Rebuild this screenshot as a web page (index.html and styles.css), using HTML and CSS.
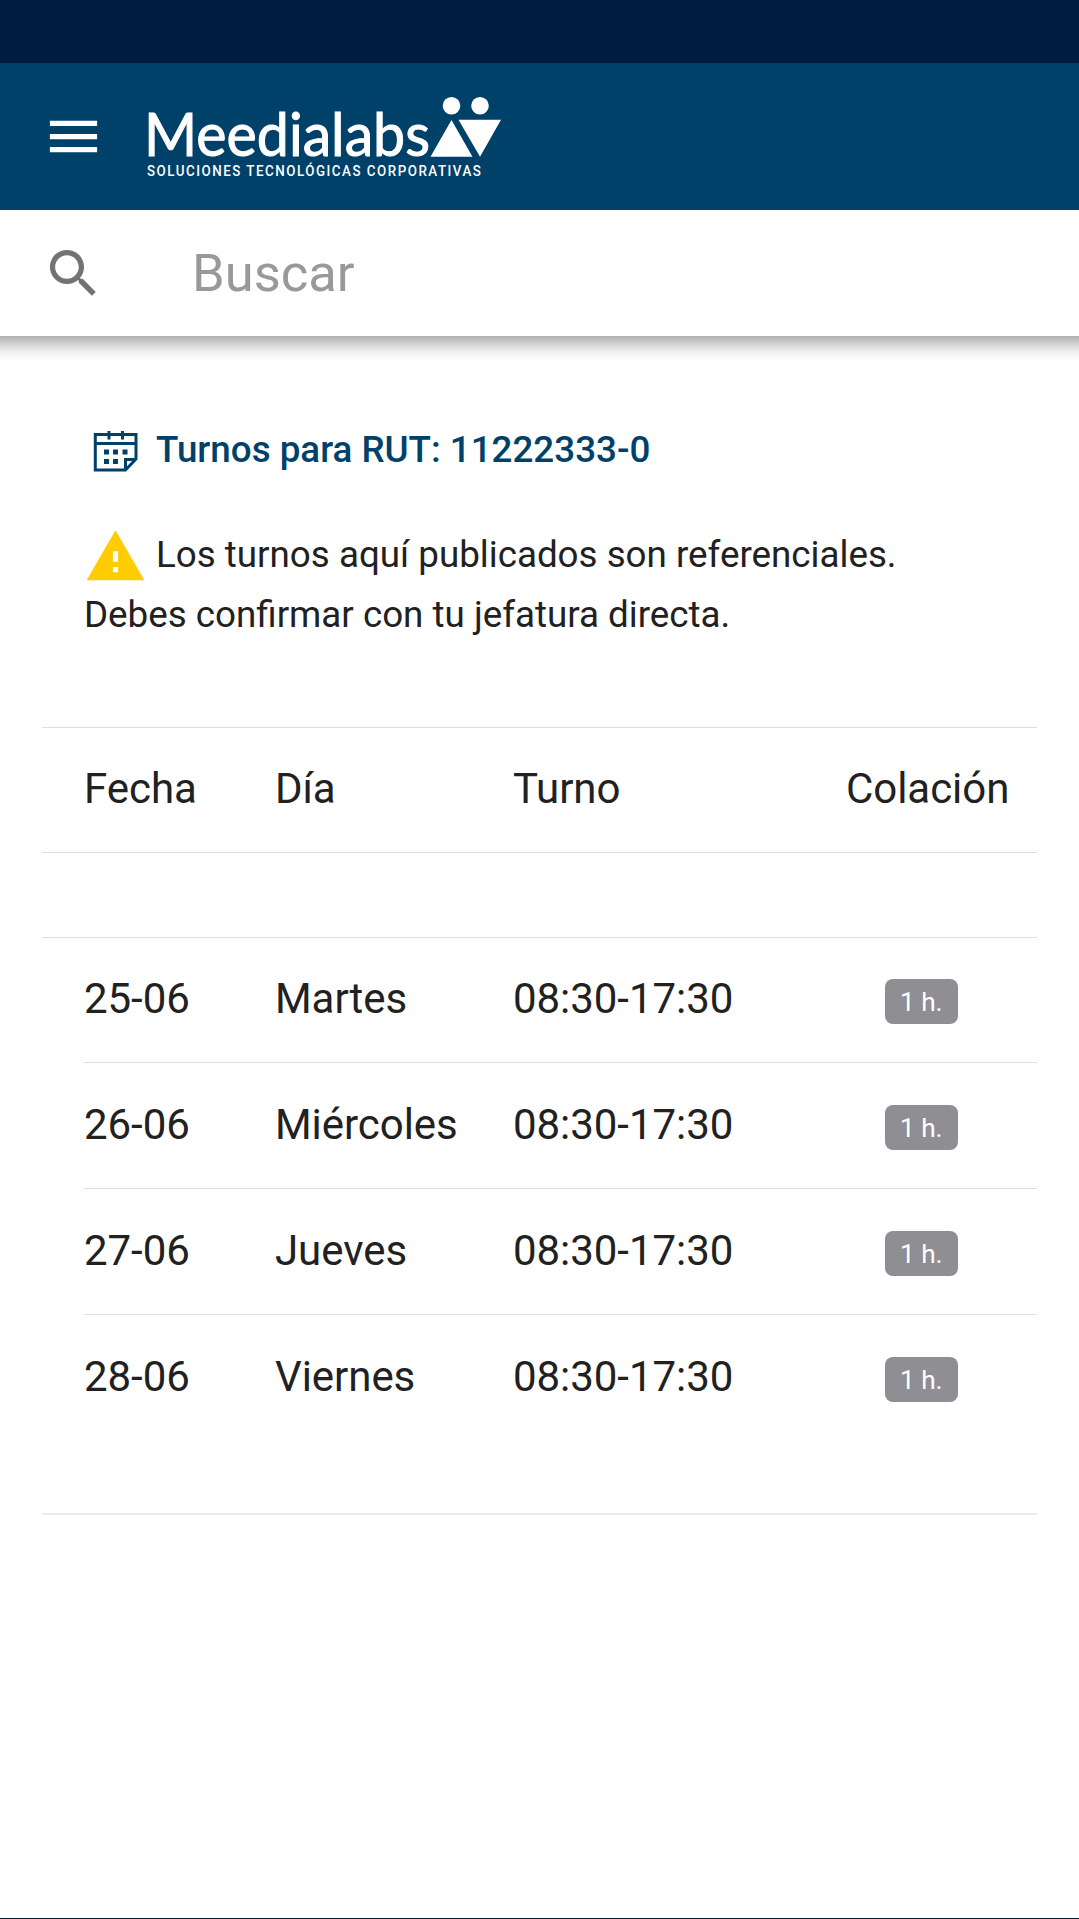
FILE: index.html
```html
<!doctype html>
<html lang="es">
  <head>
    <meta charset="UTF-8" />
    <meta name="viewport" content="width=device-width, initial-scale=1.0" />
    <title>Meedialabs - Turnos</title>
    <link rel="stylesheet" href="styles.css">
  </head>
  <body>
    <div class="status-bar"></div>
    <header class="navbar">
      <svg class="icon" viewBox="0 0 24 24" fill="#fff">
        <path d="M3 18h18v-2H3v2zm0-5h18v-2H3v2zm0-7v2h18V6H3z" />
      </svg>
      <svg class="logo" width="360" height="90" viewBox="0 0 360 90" fill="#fff">
        <text class="logo-name" x="3" y="64.2" textLength="286" lengthAdjust="spacingAndGlyphs">Meedialabs</text>
        <text class="logo-tagline" x="6.8" y="84.3" textLength="379.5" transform="scale(0.88 1)">SOLUCIONES TECNOLÓGICAS CORPORATIVAS</text>
        <circle cx="310.5" cy="13.7" r="8.8" />
        <circle cx="339" cy="13.7" r="8.8" />
        <path d="M310.5 28 331.5 64.7H289.5zM317.5 27.7H360L339 64.7z" />
      </svg>
    </header>
    <div class="searchbar">
      <svg class="icon" viewBox="0 0 24 24" fill="#737373">
        <path d="M15.5 14h-.79l-.28-.27A6.471 6.471 0 0 0 16 9.5 6.5 6.5 0 1 0 9.5 16c1.61 0 3.09-.59 4.23-1.57l.27.28v.79l5 4.99L20.49 19l-4.99-5zm-6 0C7.01 14 5 11.99 5 9.5S7.01 5 9.5 5 14 7.01 14 9.5 11.99 14 9.5 14z" />
      </svg>
      <span class="placeholder">Buscar</span>
    </div>

    <main class="content">
      <h1 class="title">
        <svg class="icon" viewBox="0 0 63 63" fill="none" stroke="#00416a" stroke-width="3">
          <path d="M11.3 14.5H52V39L41.5 50H11.3zM11.3 23.5H52M25 11v8.5M38.5 11v8.5M41.5 50V39.5H52" />
          <path d="M20 32h5M29 32h5M38.5 32h5M20 41.5h5M29 41.5h5" stroke-width="5" />
        </svg>
        <span>Turnos para RUT: 11222333-0</span>
      </h1>
      <div class="notice">
        <div class="notice-row">
          <svg class="icon" viewBox="0 0 24 24" fill="#ffcc00">
            <path d="M1 21h22L12 2 1 21zm12-3h-2v-2h2v2zm0-4h-2v-4h2v4z" />
          </svg>
          <span>Los turnos aquí publicados son referenciales.</span>
        </div>
        <div class="notice-text">Debes confirmar con tu jefatura directa.</div>
      </div>

      <div class="list list-header">
        <div class="row">
          <span>Fecha</span><span>Día</span><span>Turno</span><span>Colación</span>
        </div>
      </div>
      <div class="list list-body">
        <div class="row">
          <span>25-06</span><span>Martes</span><span>08:30-17:30</span><span class="badge">1 h.</span>
        </div>
        <div class="row">
          <span>26-06</span><span>Miércoles</span><span>08:30-17:30</span><span class="badge">1 h.</span>
        </div>
        <div class="row">
          <span>27-06</span><span>Jueves</span><span>08:30-17:30</span><span class="badge">1 h.</span>
        </div>
        <div class="row">
          <span>28-06</span><span>Viernes</span><span>08:30-17:30</span><span class="badge">1 h.</span>
        </div>
      </div>
    </main>
    <div class="bottom-bar"></div>
  </body>
</html>
```

FILE: styles.css
```css
* {
  box-sizing: border-box;
}
body {
  background-color: #fff;
  margin: 0;
  height: 1919px;
  font-family: Roboto, sans-serif;
  color: #212121;
  display: flex;
  flex-direction: column;
}
.icon {
  width: 63px;
  height: 63px;
  flex: none;
}
.status-bar {
  height: 63px;
  background-color: #001c3f;
}
.navbar {
  height: 147px;
  padding-left: 42px;
  background-color: #00416a;
  display: flex;
  align-items: center;
  gap: 36px;
}
.logo {
  margin-top: 1px;
}
.logo-name {
  font-family: Lato, sans-serif;
  font-size: 60px;
  stroke: #fff;
  stroke-width: 1px;
}
.logo-tagline {
  font-size: 15.2px;
  font-weight: 500;
}
.searchbar {
  height: 126px;
  padding-left: 42px;
  display: flex;
  align-items: center;
  gap: 87px;
  background: #fff;
}
.placeholder {
  font-size: 52.5px;
  color: #999;
}
.content {
  flex: 1;
  padding: 84px 42px 0;
  /* toolbar shadow */
  background: linear-gradient(#b0b0b0, #d2d2d2 8px, #f0f0f0 16px, #fff 25px) no-repeat;
  background-size: 100% 25px;
}
.title {
  margin: 0;
  padding-left: 42px;
  height: 63px;
  display: flex;
  align-items: center;
  gap: 9px;
  font-size: 36.75px;
  font-weight: 500;
  color: #00416a;
}
.title span,
.notice-row span {
  padding-bottom: 4px;
}
.notice {
  margin: 42px 0 0;
  padding-left: 42px;
  height: 202px;
  font-size: 36.75px;
  line-height: 56px;
}
.notice-text {
  line-height: 54px;
}
.notice-row {
  display: flex;
  align-items: center;
  gap: 9px;
}
.list {
  border-top: 1px solid #dedede;
  font-size: 42px;
  letter-spacing: -0.05px;
}
.row {
  height: 126px;
  margin-left: 42px;
  padding-bottom: 3px;
  border-bottom: 1px solid #dedede;
  display: grid;
  grid-template-columns: 191px 238px 333px 191px;
  align-items: center;
}
.list-header .row {
  height: 125px;
  margin-left: 0;
  padding-left: 42px;
}
.list-body {
  margin-top: 84px;
  padding-bottom: 72px;
  border-bottom: 2px solid #ececec;
}
.list-body .row:first-child {
  height: 125px;
}
.list-body .row:last-child {
  border-bottom: none;
}
.badge {
  justify-self: start;
  margin: 6px 0 0 39px;
  padding-left: 15px;
  width: 73px;
  height: 45px;
  border-radius: 8px;
  background-color: #8e8e93;
  color: #fff;
  font-size: 26.25px;
  line-height: 46px;
}
.bottom-bar {
  height: 1px;
  background-color: #001c2f;
}
```
